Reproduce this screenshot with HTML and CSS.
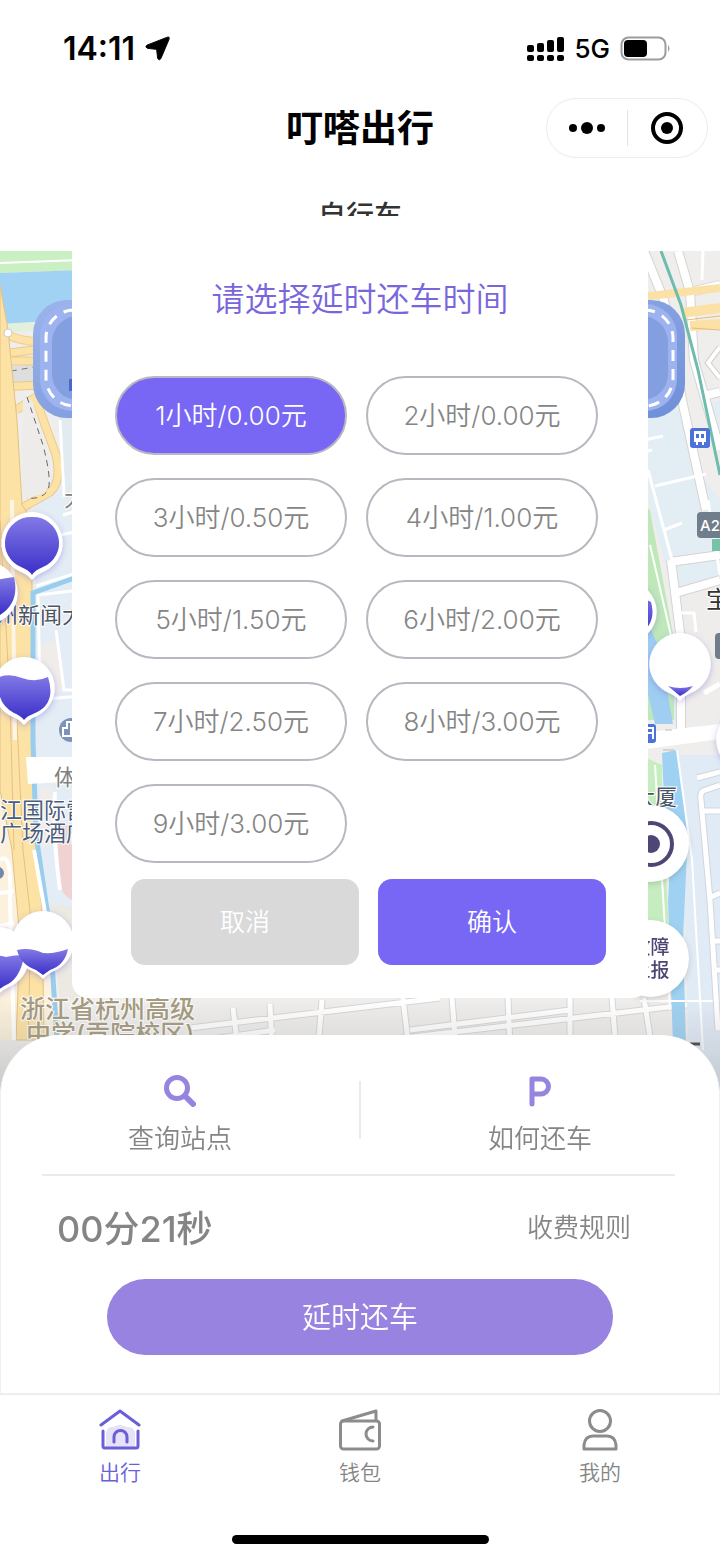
FILE: index.html
```html
<!DOCTYPE html>
<html lang="zh-CN">
<head>
    <meta charset="UTF-8">
    <meta name="viewport" content="width=device-width, initial-scale=1.0">
    <title>叮嗒出行</title>
    <link rel="stylesheet" href="styles.css">
</head>
<body>
<div class="app">
    <!-- Status bar -->
    <div class="status-bar">
        <div class="status-left">
            <span class="clock">14:11</span>
            <svg class="location-arrow" viewBox="0 0 26 26" aria-hidden="true">
                <path d="M22.500 1.500Q26 0 25 3.500L16.500 23.500Q15 26 13.200 23.500L12.200 15Q12 14 11 13.800L2.500 12.800Q-0.500 11.500 2 9.500Z" stroke="#000"/>
            </svg>
        </div>
        <div class="status-right">
            <svg class="signal" viewBox="0 0 38 26" aria-hidden="true">
                <g fill="#000">
                    <rect x="1" y="9" width="7" height="7" rx="2"/><rect x="11" y="7" width="7" height="9" rx="2"/>
                    <rect x="21" y="4" width="7" height="12" rx="2"/><rect x="31" y="1" width="7" height="15" rx="2"/>
                    <rect x="1" y="19" width="7" height="6" rx="2"/><rect x="11" y="19" width="7" height="6" rx="2"/>
                    <rect x="21" y="19" width="7" height="6" rx="2"/><rect x="31" y="19" width="7" height="6" rx="2"/>
                </g>
            </svg>
            <span class="network">5G</span>
            <svg class="battery" viewBox="0 0 52 26" aria-hidden="true">
                <rect x="1.500" y="1.500" width="44" height="22" rx="7" fill="none" stroke="#9c9c9c" stroke-width="2"/>
                <rect x="4" y="4" width="23" height="17" rx="4" fill="#000"/>
                <path d="M48 9Q51 12.500 48 16Z" fill="#9c9c9c"/>
            </svg>
        </div>
    </div>

    <!-- Title bar -->
    <header class="nav-bar">
        <h1>叮嗒出行</h1>
        <div class="capsule">
            <button type="button" aria-label="更多">
                <svg viewBox="0 0 36 12" width="36" height="12"><circle cx="4" cy="6" r="4"/><circle cx="18" cy="6" r="6"/><circle cx="32" cy="6" r="4"/></svg>
            </button>
            <span class="capsule-line"></span>
            <button type="button" aria-label="关闭">
                <svg viewBox="0 0 32 32" width="32" height="32"><circle cx="16" cy="16" r="14" fill="none" stroke="#000" stroke-width="4"/><circle cx="16" cy="16" r="6"/></svg>
            </button>
        </div>
    </header>
    <div class="vehicle-type">自行车</div>

    <!-- Map -->
    <main class="map">
        <svg class="map-canvas" viewBox="0 251 720 840" preserveAspectRatio="xMidYMin slice" aria-hidden="true">
            <defs>
                <linearGradient id="fill" x1="0" y1="0" x2="0" y2="1">
                    <stop offset="0" stop-color="#8279e6"/><stop offset="1" stop-color="#3a2fc8"/>
                </linearGradient>
                <linearGradient id="track" x1="0" y1="0" x2="1" y2="1">
                    <stop offset="0" stop-color="#9cb3ea"/><stop offset="1" stop-color="#6f8fd8"/>
                </linearGradient>
                <filter id="shadow" x="-30%" y="-30%" width="160%" height="160%">
                    <feDropShadow dx="0" dy="2" stdDeviation="3" flood-color="#6a5fd0" flood-opacity="0.4"/>
                </filter>
                <path id="pin" d="M0 -31A31 31 0 0 1 14 27.500Q5 31 0 37Q-5 31 -14 27.500A31 31 0 0 1 0 -31Z"/>
                <linearGradient id="fade" x1="0" y1="0" x2="0" y2="1">
                    <stop offset="0" stop-color="#888" stop-opacity="0"/><stop offset="1" stop-color="#888" stop-opacity="0.35"/>
                </linearGradient>
            </defs>
            <rect y="251" width="720" height="840" fill="#efeeec"/>

            <!-- West side: river, blocks, elevated road -->
            <path d="M0 251H80V270L0 273Z" fill="#c9efc3"/>
            <path d="M0 263L80 260" stroke="#fff" stroke-width="2"/>
            <path d="M0 273L80 270V320L0 325Z" fill="#a1d2f3"/>
            <path d="M0 324L80 319V327L0 333Z" fill="#e3f0dd"/>
            <path d="M35 480H80V1000H60L36 840Z" fill="#e4edf5"/>
            <path d="M60 418H80V500H66Z" fill="#e2ecf0"/>
            <path d="M38 645L55 640L64 690L38 700ZM40 788L52 786V840L42 850Z" fill="#efecea"/>
            <path d="M56 825H80V902Q64 900 60 885Z" fill="#f1d2d2"/>
            <path d="M50 904L80 908V1000H60Z" fill="#ebe9e2"/>
            <path d="M0 367L40 364V382L0 386Z" fill="#dedede"/>
            <path d="M0 373L40 366M0 386L40 381" stroke="#777" stroke-dasharray="6 5" fill="none"/>
            <g fill="none" stroke="#eac98d" stroke-width="9">
                <path d="M8 335Q20 341 40 342M10 353L40 349M12 361H40M0 387L40 385M16 410L36 397M36 400L56 455Q62 482 50 492L22 508"/>
            </g>
            <g fill="none" stroke="#fce2a4" stroke-width="7">
                <path d="M8 335Q20 341 40 342M10 353L40 349M12 361H40M0 387L40 385M16 410L36 397M36 400L56 455Q62 482 50 492L22 508"/>
            </g>
            <path d="M23 394L33 402L49 460Q51 492 42 494L22 500Z" fill="#eeecea"/>
            <path d="M27 397L43 445Q52 480 48 490Q42 500 26 498" fill="none" stroke="#666" stroke-dasharray="6 5"/>
            <path d="M60 420L64 495L72 494M63 515L80 510M60 535L80 531M36 586L80 572M36 700L80 696M40 690L38 595L80 590M56 630L64 690H80" fill="none" stroke="#fff" stroke-width="3"/>
            <path d="M0 285L8 330L17 420L22 505L33 600V740L38 850L54 940L60 1040H0Z" fill="#fbf1dc"/>
            <path d="M0 285L8 330L17 420L22 505L32 520V740L35 830L42 910L44 1040H16L20 940L12 850L0 790V345Z" fill="#fce2a4" stroke="#e3c184"/>
            <path d="M13 500L16 700L23 850L31 920L28 1040M0 520L10 700L14 850" stroke="#e3c184" fill="none"/>
            <path d="M12 500L15 740" stroke="#fdf6e6" stroke-width="4"/>
            <circle cx="8" cy="333" r="4" fill="#fff" stroke="#ccc"/>
            <path d="M80 576L33 593V740L36 835L50 930L57 1040" fill="none" stroke="#99cdee" stroke-width="5"/>
            <path d="M26 757H80V781L28 784Z" fill="#fff"/>
            <path d="M0 860Q12 850 10 900L14 1040M0 893L14 891M0 926L14 923M34 850L50 940M55 792Q52 830 60 890" fill="none" stroke="#fff" stroke-width="4"/>
            <circle cx="-2" cy="873" r="6" fill="#7387ad"/>
            <circle cx="71" cy="730" r="12" fill="#7e93ba"/>
            <path d="M63 736V728H67V722H71V736Z" fill="none" stroke="#fff" stroke-width="2"/>

            <!-- South streets -->
            <g fill="none" stroke="#d9d7d5" stroke-width="7">
                <path d="M190 1028L440 998M300 1050L720 1001M205 1040L275 1030M233 1008L238 1050M270 1004L272 1050M322 1000L318 1050M402 990L409 1050M452 998L456 1050M508 998L510 1050M570 998V1050M612 998L616 1050M644 998L652 1050M410 1030L570 1010"/>
            </g>
            <g fill="none" stroke="#fff" stroke-width="5">
                <path d="M190 1028L440 998M300 1050L720 1001M205 1040L275 1030M233 1008L238 1050M270 1004L272 1050M322 1000L318 1050M402 990L409 1050M452 998L456 1050M508 998L510 1050M570 998V1050M612 998L616 1050M644 998L652 1050M410 1030L570 1010"/>
            </g>

            <!-- East side -->
            <path d="M640 405L683 410L697 470L720 500V590L675 600L640 470Z" fill="#e2edf4"/>
            <path d="M706 405L720 400V440Z" fill="#e2edf4"/>
            <path d="M640 495L675 640L690 1091H720V755H680Z" fill="#e1ebf6"/>
            <path d="M674 600L720 582V735L680 740Z" fill="#efedeb"/>
            <path d="M640 500L650 510L674 640V720H640Z" fill="#bfe8b9"/>
            <path d="M650 545L672 640" stroke="#fff" stroke-width="2"/>
            <path d="M640 605L660 650L673 724H655L640 660Z" fill="#9fcef2"/>
            <path d="M646 758L662 765V800L670 950H640Z" fill="#c6edbf"/>
            <path d="M662 753L677 750L688 830L683 940L686 1045H673L668 900Q672 850 664 800Z" fill="#9fd2f2"/>
            <path d="M655 765L670 1010M677 750L692 860L703 1050M640 1001H720" stroke="#fff" stroke-width="2" fill="none"/>
            <g fill="none" stroke="#d6d4d2" stroke-width="10">
                <path d="M678 251L690 292L694 360L720 450M644 251L664 300L682 400L706 510M690 292L720 285M703 396L720 392M670 562L720 555M672 594L720 580M671 560L681 640V730"/>
            </g>
            <g fill="none" stroke="#fff" stroke-width="8">
                <path d="M678 251L690 292L694 360L720 450M644 251L664 300L682 400L706 510M690 292L720 285M703 396L720 392M670 562L720 555M672 594L720 580M671 560L681 640V730"/>
            </g>
            <path d="M640 441L663 436M640 453L652 450M648 470L672 560M655 486L706 474M664 530L682 523M703 251L702 280M681 613H694L696 632M708 500L720 575" stroke="#fff" stroke-width="3" fill="none"/>
            <path d="M720 347L708 363L720 378" stroke="#ccc" stroke-width="6" fill="none"/>
            <path d="M720 347L708 363L720 378" stroke="#fff" stroke-width="4" fill="none"/>
            <path d="M640 297L720 288" stroke="#fbe1a6" stroke-width="8"/>
            <path d="M682 313L720 308M690 326L720 324" stroke="#fbe1a6" stroke-width="10"/>
            <path d="M686 320L720 316M692 328L720 330" stroke="#e9b878"/>
            <path d="M661 251L681 305L698 370L720 475" stroke="#6fbcae" stroke-width="3" fill="none"/>
            <path d="M640 733L720 724V739L640 750Z" fill="#fff"/>
            <path d="M665 730H672M663 750H674" stroke="#bbb"/>
            <path d="M720 785L703 791Q700 793 701 800L710 900L718 1030M703 811H720M711 897L720 893M714 941H720M714 970H720M697 778L720 772" fill="none" stroke="#d0d6de" stroke-width="7"/>
            <path d="M720 785L703 791Q700 793 701 800L710 900L718 1030M703 811H720M711 897L720 893M714 941H720M714 970H720M697 778L720 772" fill="none" stroke="#fff" stroke-width="5"/>
            <path d="M704 693L720 684" stroke="#fff" stroke-width="5"/>

            <!-- Track banner -->
            <rect x="33" y="300" width="652" height="118" rx="34" fill="url(#track)"/>
            <rect x="40" y="304" width="637" height="107" rx="32" fill="#9db3ef"/>
            <rect x="52" y="316" width="616" height="84" rx="26" fill="#839fe0"/>
            <rect x="46" y="310" width="627" height="96" rx="28" fill="none" stroke="#fff" stroke-width="3" stroke-dasharray="11 8"/>
            <rect x="69" y="379" width="20" height="12" fill="#4b68c8"/>

            <!-- Map badges -->
            <rect x="690" y="428" width="20" height="20" rx="3" fill="#4d72dc"/>
            <path d="M694 431H706V442H704V445H702V442H698V445H696V442H694Z" fill="#fff"/>
            <path d="M696 434H699V438H696ZM701 434H704V438H701Z" fill="#4d72dc"/>
            <rect x="640" y="724" width="16" height="19" rx="3" fill="#4d72dc"/>
            <path d="M645 728H653V739M648 733H652" stroke="#fff" stroke-width="2" fill="none"/>
            <rect x="712" y="539" width="14" height="12" fill="#76c3a7"/>
            <rect x="697" y="512" width="40" height="26" rx="4" fill="#707d8c"/>
            <text class="badge-text" x="700" y="531">A2</text>
            <rect x="715" y="633" width="30" height="26" rx="4" fill="#707d8c"/>

            <!-- Place names -->
            <g class="place">
                <text x="-4" y="623">州新闻大</text>
                <text x="64" y="506" class="place-gray">大</text>
                <text x="54" y="785" class="place-gray">体</text>
                <text x="0" y="818" class="place-blue">江国际雷</text>
                <text x="0" y="841" class="place-blue">广场酒店</text>
                <text x="633" y="805">大厦</text>
                <text x="706" y="608" class="place-dark">宝</text>
            </g>
            <g class="school">
                <text x="20" y="1018">浙江省杭州高级</text>
                <text x="26" y="1043">中学(贡院校区)</text>
            </g>

            <!-- Station pins -->
            <g filter="url(#shadow)" fill="#fff">
                <use href="#pin" x="-13" y="593"/>
                <use href="#pin" x="32" y="543"/>
                <use href="#pin" x="24" y="688"/>
                <use href="#pin" x="-2" y="958"/>
                <use href="#pin" x="43" y="942"/>
                <use href="#pin" x="626" y="612"/>
                <use href="#pin" x="680" y="664"/>
                <use href="#pin" x="747" y="740"/>
            </g>
            <g fill="url(#fill)">
                <path d="M32 517A26 26 0 0 1 43 567Q35 570 32 575Q29 570 21 567A26 26 0 0 1 32 517Z"/>
                <path d="M-20 583Q0 579 14 577Q20 602 0 615H-20Z"/>
                <path d="M-1 677Q10 673 22 678Q36 683 48 677Q57 705 33 714Q27 716 24 720Q21 716 14 713Q-5 703 -1 677Z"/>
                <path d="M-28 957Q-10 953 6 957Q18 954 24 956Q20 980 4 986L-2 990Z"/>
                <path d="M17 950Q30 947 43 953Q55 954 68 949Q65 965 50 970L43 975L36 970Q21 965 17 950Z"/>
                <path d="M626 590L651 602Q656 620 644 631L626 640Z"/>
                <path d="M668 686Q680 690 693 686Q688 692 680 696Q674 691 668 686Z"/>
            </g>
            <path d="M690 1044H700" stroke="#444" stroke-width="3"/>
            <rect y="998" width="720" height="93" fill="url(#fade)"/>
        </svg>
        <div class="map-tools">
            <button type="button" aria-label="定位">
                <svg viewBox="0 0 50 50" width="50" height="50"><circle cx="25" cy="25" r="21" fill="none" stroke="#4f4675" stroke-width="4"/><circle cx="25" cy="25" r="9" fill="#4f4675"/></svg>
            </button>
            <button type="button">故障<br>上报</button>
        </div>
    </main>

    <!-- Ride panel -->
    <section class="sheet">
        <div class="shortcuts">
            <a class="shortcut" href="#stations">
                <svg viewBox="0 0 32 32" width="32" height="32" fill="none" stroke="#9684df" stroke-width="5" stroke-linecap="round"><circle cx="13" cy="13" r="10.500"/><path d="M21 21L29 29" stroke-width="6"/></svg>
                <span>查询站点</span>
            </a>
            <span class="shortcut-line"></span>
            <a class="shortcut" href="#return">
                <svg viewBox="0 0 32 32" width="32" height="32" fill="none" stroke="#9684df" stroke-width="5" stroke-linecap="round" stroke-linejoin="round"><path d="M8 29V4H17A7.500 7.500 0 0 1 17 19H8"/></svg>
                <span>如何还车</span>
            </a>
        </div>
        <div class="ride-row">
            <span class="ride-time">00分21秒</span>
            <a class="ride-rules" href="#rules">收费规则</a>
        </div>
        <button class="delay-button" type="button">延时还车</button>
    </section>

    <!-- Bottom tabs -->
    <nav class="tab-bar">
        <a class="tab active" href="#ride">
            <svg viewBox="0 0 42 42" width="42" height="42" fill="none" stroke="#6a5fd6" stroke-width="3" stroke-linecap="round" stroke-linejoin="round">
                <path d="M7 38V24Q8 17 14 18Q21 14 28 18Q35 17 36 24V38Z" fill="#e6e2f8" stroke="none"/>
                <path d="M2 16L21 2L40 16M4 22V37Q4 39 6 39H37Q39 39 39 37V22M15 33V28A6 6 0 0 1 28 28V33"/>
            </svg>
            <span>出行</span>
        </a>
        <a class="tab" href="#wallet">
            <svg viewBox="0 0 42 42" width="42" height="42" fill="none" stroke="#8c8c8c" stroke-width="3" stroke-linecap="round" stroke-linejoin="round">
                <rect x="1.500" y="12" width="39" height="28" rx="3"/><path d="M3 12L37 2V11M34 18A7 7 0 0 0 34 32"/>
            </svg>
            <span>钱包</span>
        </a>
        <a class="tab" href="#mine">
            <svg viewBox="0 0 42 42" width="42" height="42" fill="none" stroke="#8c8c8c" stroke-width="3" stroke-linejoin="round">
                <circle cx="21" cy="12" r="10.500"/><path d="M5 40V36Q6 27 14 27H28Q36 27 37 36V40Z"/>
            </svg>
            <span>我的</span>
        </a>
    </nav>
    <div class="home-indicator"></div>

    <!-- Delay dialog -->
    <form class="dialog" role="dialog" aria-labelledby="dialogTitle">
        <h2 id="dialogTitle">请选择延时还车时间</h2>
        <div class="options">
            <label class="option"><input type="radio" name="delay" value="1" checked>1小时/0.00元</label>
            <label class="option"><input type="radio" name="delay" value="2">2小时/0.00元</label>
            <label class="option"><input type="radio" name="delay" value="3">3小时/0.50元</label>
            <label class="option"><input type="radio" name="delay" value="4">4小时/1.00元</label>
            <label class="option"><input type="radio" name="delay" value="5">5小时/1.50元</label>
            <label class="option"><input type="radio" name="delay" value="6">6小时/2.00元</label>
            <label class="option"><input type="radio" name="delay" value="7">7小时/2.50元</label>
            <label class="option"><input type="radio" name="delay" value="8">8小时/3.00元</label>
            <label class="option"><input type="radio" name="delay" value="9">9小时/3.00元</label>
        </div>
        <div class="actions">
            <button class="cancel" type="button">取消</button>
            <button class="confirm" type="submit">确认</button>
        </div>
    </form>
</div>
</body>
</html>
```
FILE: styles.css
```css
* {
    box-sizing: border-box;
}
body {
    margin: 0;
    font-family: Inter, "Noto Sans CJK SC", sans-serif;
    font-weight: 350;
    background-color: #fff;
    color: #858585;
}
button {
    font-family: inherit;
    font-weight: inherit;
    border: none;
    padding: 0;
    cursor: pointer;
}
a {
    color: inherit;
    text-decoration: none;
}
svg {
    display: block;
}
.app {
    position: relative;
    overflow: hidden;
}

/* Status bar */
.status-bar {
    display: flex;
    justify-content: space-between;
    align-items: center;
    height: 97px;
    padding: 0 48px 0 63px;
    color: #000;
}
.status-left,
.status-right {
    display: flex;
    align-items: center;
    gap: 10px;
}
.clock {
    font-size: 32px;
    font-weight: 600;
}
.location-arrow {
    width: 25px;
    height: 25px;
}
.signal {
    width: 38px;
    height: 26px;
}
.network {
    font-size: 26px;
    font-weight: 500;
}
.battery {
    width: 52px;
    height: 26px;
}

/* Title bar */
.nav-bar {
    display: grid;
    grid-template-columns: 1fr auto 1fr;
    align-items: center;
    height: 60px;
    padding: 0 12px;
}
.nav-bar h1 {
    grid-column: 2;
    margin: 0;
    padding-top: 2px;
    font-size: 37px;
    font-weight: 700;
    line-height: 60px;
    color: #000;
}
.capsule {
    justify-self: end;
    display: flex;
    align-items: center;
    width: 162px;
    height: 60px;
    border: 1px solid #ececec;
    border-radius: 30px;
}
.capsule button {
    flex: 1;
    display: flex;
    justify-content: center;
    background: none;
}
.capsule-line {
    width: 1px;
    height: 36px;
    background-color: #e2e2e2;
}
.vehicle-type {
    height: 94px;
    padding-top: 39px;
    font-size: 28px;
    font-weight: 500;
    line-height: 40px;
    text-align: center;
    color: #333;
}

/* Map */
.map {
    position: relative;
    height: 840px;
}
.map-canvas {
    width: 100%;
    height: 100%;
}
.place {
    font-size: 22px;
    font-weight: 400;
    fill: #4c5566;
    stroke: #fff;
    stroke-width: 2px;
    paint-order: stroke;
}
.place-gray {
    fill: #808080;
}
.place-blue {
    fill: #4a5c7a;
}
.place-dark {
    font-size: 24px;
    fill: #333;
}
.school {
    font-size: 25px;
    font-weight: 500;
    fill: #a59b7f;
    stroke: #fff;
    stroke-width: 2px;
    paint-order: stroke;
}
.badge-text {
    font-size: 15px;
    font-weight: 500;
    fill: #fff;
}
.map-tools {
    position: absolute;
    top: 554px;
    right: 31px;
    display: flex;
    flex-direction: column;
    gap: 38px;
}
.map-tools button {
    display: flex;
    justify-content: center;
    align-items: center;
    width: 77px;
    height: 77px;
    border-radius: 50%;
    background-color: #fff;
    box-shadow: 0 2px 6px rgba(0, 0, 0, 0.15);
    font-size: 19px;
    font-weight: 500;
    line-height: 23px;
    color: #4f4675;
}

/* Ride panel */
.sheet {
    position: relative;
    margin-top: -56px;
    padding: 40px 0 38px;
    border: 1px solid #f0f0f0;
    border-top: none;
    border-radius: 60px 60px 0 0;
    background-color: #fff;
}
.shortcuts {
    display: flex;
    padding-bottom: 16px;
}
.shortcut {
    flex: 1;
    display: flex;
    flex-direction: column;
    align-items: center;
    gap: 12px;
    font-size: 26px;
    line-height: 39px;
}
.shortcut-line {
    width: 2px;
    height: 58px;
    margin-top: 6px;
    background-color: #ebebeb;
}
.ride-row {
    display: flex;
    justify-content: space-between;
    align-items: center;
    height: 105px;
    margin: 0 44px 0 41px;
    padding: 0 44px 4px 15px;
    border-top: 2px solid #ebebeb;
}
.ride-time {
    font-size: 36px;
    font-weight: 500;
}
.ride-rules {
    font-size: 26px;
}
.delay-button {
    display: block;
    width: calc(100% - 212px);
    height: 76px;
    margin: 0 auto;
    padding-bottom: 4px;
    border-radius: 38px;
    background-color: #9884e0;
    font-size: 29px;
    color: #fff;
}

/* Bottom tabs */
.tab-bar {
    display: flex;
    height: 141px;
    padding-top: 14px;
    border-top: 1px solid #ebebeb;
}
.tab {
    flex: 1;
    display: flex;
    flex-direction: column;
    align-items: center;
    gap: 6px;
    font-size: 21px;
    line-height: 32px;
}
.tab.active {
    color: #6a5fd6;
}
.home-indicator {
    width: 257px;
    height: 9px;
    margin: 0 auto 15px;
    border-radius: 5px;
    background-color: #000;
}

/* Delay dialog */
.dialog {
    position: absolute;
    top: 216px;
    left: 10%;
    width: 80%;
    padding: 63px 50px 33px 43px;
    border-radius: 0 0 16px 16px;
    background-color: #fff;
}
.dialog h2 {
    margin: 0 0 57px;
    padding-left: 7px;
    font-size: 33px;
    font-weight: inherit;
    line-height: 40px;
    text-align: center;
    color: #7866dc;
}
.options {
    display: grid;
    grid-template-columns: 1fr 1fr;
    gap: 23px 19px;
}
.option {
    display: flex;
    justify-content: center;
    align-items: center;
    height: 79px;
    padding-bottom: 4px;
    border: 2px solid #b9b7c0;
    border-radius: 40px;
    font-size: 26px;
    cursor: pointer;
}
.option input {
    appearance: none;
    width: 0;
    height: 0;
    margin: 0;
}
.option:has(input:checked) {
    background-color: #7866f4;
    color: #fff;
}
.actions {
    display: flex;
    gap: 19px;
    margin: 16px -8px 0 16px;
}
.actions button {
    flex: 1;
    height: 86px;
    padding-bottom: 4px;
    border-radius: 14px;
    font-size: 25px;
    color: #fff;
}
.cancel {
    background-color: #d9d9d9;
}
.confirm {
    background-color: #7866f4;
}
```
